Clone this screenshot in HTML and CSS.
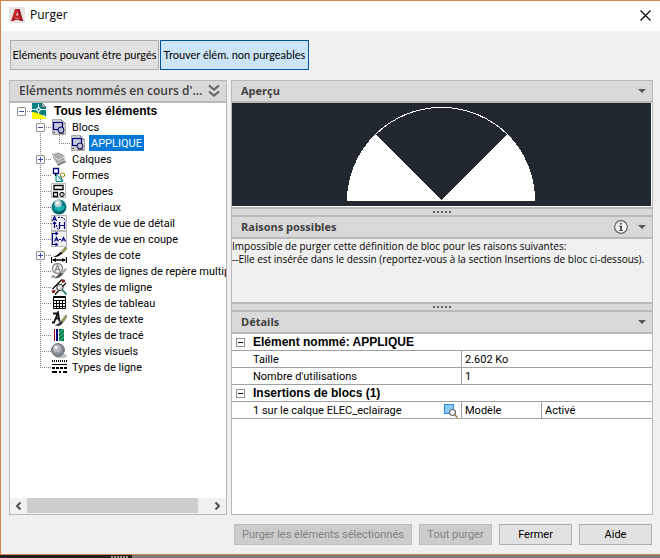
FILE: index.html
```html
<!DOCTYPE html>
<html lang="fr">
<head>
<meta charset="utf-8">
<title>Purger</title>
<link rel="stylesheet" href="styles.css">
</head>
<body>
<main class="dialog">
  <header class="titlebar">
    <svg class="logo" viewBox="0 0 16 16" aria-hidden="true">
      <rect width="16" height="16" fill="#e9e4e4"/>
      <path d="M2 14 6 2h4.500L14 14h-3.500l-.8-3H6.500l-1.300 3z" fill="#c4262e"/>
      <path d="M7.200 8.500 8.300 4.500 9.300 8.500z" fill="#eadada"/>
      <path d="M10.500 2 14 14h-2L8.500 2z" fill="#8f1a20"/>
      <path d="M2 14 4 11.500h8l1 1.500H5.500L4.800 14z" fill="#a51d25"/>
    </svg>
    <h1 class="title">Purger</h1>
    <button class="close" type="button" aria-label="Fermer la fenêtre">
      <svg viewBox="0 0 11 11" aria-hidden="true"><path d="M.5.500l10 10M10.500.500l-10 10" stroke="#000" stroke-width="1.200"/></svg>
    </button>
  </header>

  <nav class="modes">
    <button class="mode" type="button">Eléments pouvant être purgés</button>
    <button class="mode active" type="button">Trouver élém. non purgeables</button>
  </nav>

  <div class="panes">
    <section class="pane">
      <div class="head">
        <h2 class="head-title wide">Eléments nommés en cours d'...</h2>
        <svg class="chevrons" viewBox="0 0 12 14" aria-hidden="true"><path d="M1 1.500l5 4 5-4M1 7.500l5 4 5-4" fill="none" stroke="#666" stroke-width="2.200"/></svg>
      </div>
      <ul class="tree">
        <li class="row root">
          <span class="gutter stub"><button class="toggle" type="button" aria-label="Réduire"></button></span>
          <svg class="icon" viewBox="0 0 16 16" aria-hidden="true">
            <path d="M0 0h10l4 4v8H0z" fill="#008080"/><path d="M10 0v4h4z" fill="#ddd" stroke="#555" stroke-width=".7"/>
            <path d="M0 9c5 0 9 2 14 6v1H0z" fill="#ff0"/><path d="M7 10c3 0 5 2 7 4v-4z" fill="#008080"/>
            <path d="M0 6.500h5M8 6.500h6M6.500 1v4M6.500 8v3M5 5h3v3H5z" fill="none" stroke="#fff"/>
          </svg>
          <span class="label strong">Tous les éléments</span>
        </li>
        <li class="row">
          <span class="gutter"><button class="toggle" type="button" aria-label="Réduire"></button></span>
          <svg class="icon" viewBox="0 0 16 16" aria-hidden="true"><use href="#block"/></svg>
          <span class="label">Blocs</span>
        </li>
        <li class="row">
          <span class="guide"></span><span class="gutter last"></span>
          <svg class="icon" viewBox="0 0 16 16" aria-hidden="true">
            <g id="block"><path d="M1.500.500h9l4 4v11h-13z" fill="#d0d0d0" stroke="#aaa"/><path d="M10.500.500v4h4z" fill="#f4f4f4" stroke="#999"/>
            <rect x="2.500" y="3.500" width="9" height="7" fill="#c8c8dc" stroke="#000080" stroke-width="1.200"/>
            <circle cx="10" cy="11" r="3" fill="#bdbdd0" stroke="#000060"/><path d="M2 13.500h2M8 14.500h5" stroke="#555"/></g>
          </svg>
          <span class="label selected">APPLIQUE</span>
        </li>
        <li class="row">
          <span class="gutter"><button class="toggle plus" type="button" aria-label="Développer"></button></span>
          <svg class="icon" viewBox="0 0 16 16" aria-hidden="true">
            <g stroke="#fff" stroke-width=".7"><path d="M3 9l8-2 5 4-9 4.500z" fill="#858585"/><path d="M1 6l8-2 6 4-9 4.500z" fill="#999"/><path d="M0 3l8-2 7 4-8 4.500z" fill="#ababab"/></g>
          </svg>
          <span class="label">Calques</span>
        </li>
        <li class="row">
          <span class="gutter"></span>
          <svg class="icon" viewBox="0 0 16 16" aria-hidden="true">
            <path d="M2.500 1.500h5v5h-5z" fill="#fff" stroke="#000080" stroke-width="1.300"/><path d="M5 7v7.500h6.500z" fill="#dff" stroke="#008080"/><path d="M4.500 7v2" stroke="#000"/>
            <circle cx="11.500" cy="8" r="2.200" fill="#fff" stroke="#998a00"/><path d="M9 9l3 5" stroke="#008080"/>
          </svg>
          <span class="label">Formes</span>
        </li>
        <li class="row">
          <span class="gutter"></span>
          <svg class="icon" viewBox="0 0 16 16" aria-hidden="true">
            <rect x=".5" y=".5" width="14" height="14" fill="#fff" stroke="#777" stroke-dasharray="1 1"/>
            <path d="M3 2.500h9v4H3zM2.500 9.500h4v4h-4z" fill="#fff" stroke="#000" stroke-width="1.300"/><circle cx="11" cy="11.500" r="2.200" fill="#bbb" stroke="#000"/>
          </svg>
          <span class="label">Groupes</span>
        </li>
        <li class="row">
          <span class="gutter"></span>
          <svg class="icon" viewBox="0 0 16 16" aria-hidden="true">
            <circle cx="8" cy="8" r="7.500" fill="#007c80"/><path d="M2 12c4 3 9 2 12-3 0 5-8 8-12 3z" fill="#003c48"/><ellipse cx="8.500" cy="9" rx="5" ry="3" fill="#18b4b4"/><circle cx="7" cy="4.500" r="3.800" fill="#b9cfcf"/><circle cx="6.500" cy="4" r="1.600" fill="#fff"/>
          </svg>
          <span class="label">Matériaux</span>
        </li>
        <li class="row">
          <span class="gutter"></span>
          <svg class="icon" viewBox="0 0 16 16" aria-hidden="true">
            <rect x=".5" y=".5" width="15" height="15" fill="#f2f2f2" stroke="#bbb"/>
            <path d="M1.500 6l2-4.500 2 4.500M2.500 4.500h2M3.500 7v6M2 9l1.500-2L5 9M8.500 7v7M8.500 10.500h5M13.500 7v7" fill="none" stroke="#000080" stroke-width="1.200"/><path d="M7 2.500c4-1 7 1 7.500 4M5.500 10c0 2 1 4 2.500 5" fill="none" stroke="#000080" stroke-dasharray="2 1"/>
          </svg>
          <span class="label">Style de vue de détail</span>
        </li>
        <li class="row">
          <span class="gutter"></span>
          <svg class="icon" viewBox="0 0 16 16" aria-hidden="true">
            <rect x=".5" y=".5" width="15" height="15" fill="#f2f2f2" stroke="#bbb"/>
            <path d="M6 2.500H1.500v11H6M4.500 1l2 1.500-2 1.500M4.500 12l2 1.500-2 1.500M3.500 10.500l2-4 2 4M4.500 9h2M8 8.500h2M10.500 10.500l2-4 2 4M11.500 9h2" fill="none" stroke="#000080" stroke-width="1.100"/>
          </svg>
          <span class="label">Style de vue en coupe</span>
        </li>
        <li class="row">
          <span class="gutter"><button class="toggle plus" type="button" aria-label="Développer"></button></span>
          <svg class="icon" viewBox="0 0 16 16" aria-hidden="true">
            <path d="M9 6l5.500-6 1.500 1.500L11 7z" fill="#a8a042" stroke="#444" stroke-width=".6"/><path d="M2 9.500c3 1 6 0 9-3L9.500 5C7 7 6 9 2 9.500z" fill="#000"/>
            <path d="M.5 10v6M15.500 10v6M2 13h12" stroke="#000" stroke-width="1.300"/><path d="M1 13l4-2v4zM15 13l-4-2v4z"/>
          </svg>
          <span class="label">Styles de cote</span>
        </li>
        <li class="row">
          <span class="gutter"></span>
          <svg class="icon" viewBox="0 0 16 16" aria-hidden="true">
            <circle cx="6.500" cy="5.500" r="5" fill="#eee" stroke="#888" stroke-width="1.300"/><path d="M4 8.500L6.500 2 9 8.500M5 6.500h3" fill="none" stroke="#888" stroke-width="1.200"/>
            <path d="M2 11.500l-2 3h5" fill="#888"/><path d="M9 10l5.500-5 1.500 1.500L11 12z" fill="#aaa"/><path d="M3 15c3-1 4-4 7-5.500l2 1.500c-2 3-5 5-9 4z" fill="#555"/>
          </svg>
          <span class="label">Styles de lignes de repère multiples</span>
        </li>
        <li class="row">
          <span class="gutter"></span>
          <svg class="icon" viewBox="0 0 16 16" aria-hidden="true">
            <path d="M1.500 10L11 .500M4 15.500L15 4" stroke="#000" stroke-width="1.200"/><path d="M3 12.500l9.500-10" stroke="#555" stroke-dasharray="2 1"/>
            <circle cx="12.500" cy="2" r="1.700" fill="#922"/><circle cx="2.500" cy="12.500" r="1.700" fill="#922"/><circle cx="9" cy="8.500" r="3.200" fill="#eee" fill-opacity=".8" stroke="#333"/><path d="M11.500 11l4 4.500" stroke="#087878" stroke-width="1.700"/>
          </svg>
          <span class="label">Styles de mligne</span>
        </li>
        <li class="row">
          <span class="gutter"></span>
          <svg class="icon" viewBox="0 0 16 16" aria-hidden="true">
            <path d="M2.500 1.500h12v12h-12z" fill="#fff" stroke="#000"/><path d="M2 2.500h13M2 5.500h13M2 8.500h13M2 11.500h13M5.500 5v9M8.500 5v9M11.500 5v9" stroke="#000"/>
          </svg>
          <span class="label">Styles de tableau</span>
        </li>
        <li class="row">
          <span class="gutter"></span>
          <svg class="icon" viewBox="0 0 16 16" aria-hidden="true">
            <path d="M1 11.500h2L7 1.500l1.500 9M4 7.500h4M2 2.500h4" fill="none" stroke="#111" stroke-width="1.800"/><path d="M10 10l5-6 1 1.500-4 6z" fill="#a8a042" stroke="#555" stroke-width=".6"/><path d="M4 14c3 0 4-3 6-4l2 1.500C10 15 7 16 4 14z" fill="#333"/>
          </svg>
          <span class="label">Styles de texte</span>
        </li>
        <li class="row">
          <span class="gutter"></span>
          <svg class="icon" viewBox="0 0 16 16" aria-hidden="true">
            <path d="M3 2h1v12H3z" fill="#a00000"/><path d="M5 2h2v12H5z" fill="#000080"/><path d="M8 2h5v12H8z" fill="#007a50"/><path d="M8 6l5-4M8 10l5-4M8 14l5-4" stroke="#6fd08c"/>
          </svg>
          <span class="label">Styles de tracé</span>
        </li>
        <li class="row">
          <span class="gutter"></span>
          <svg class="icon" viewBox="0 0 16 16" aria-hidden="true">
            <ellipse cx="10" cy="13" rx="6" ry="2.500" fill="#c4c4c4"/><circle cx="7" cy="7" r="6.300" fill="#8a8f96" stroke="#4c5a68"/><circle cx="6" cy="5.500" r="4" fill="#b4b8bc"/><circle cx="5" cy="4.500" r="1.800" fill="#f4f4f4"/>
          </svg>
          <span class="label">Styles visuels</span>
        </li>
        <li class="row">
          <span class="gutter last"></span>
          <svg class="icon" viewBox="0 0 16 16" aria-hidden="true">
            <path d="M1 2h15" stroke="#000" stroke-width="2" stroke-dasharray="1 1"/><path d="M1 5.500h15" stroke="#000"/><path d="M1 9h15" stroke="#000" stroke-width="2" stroke-dasharray="3 1"/><path d="M1 13h15" stroke="#000" stroke-width="2" stroke-dasharray="5 2 2 2"/>
          </svg>
          <span class="label">Types de ligne</span>
        </li>
      </ul>
      <div class="scrollbar">
        <button class="arrow" type="button" aria-label="Défiler à gauche"><svg viewBox="0 0 7 8" aria-hidden="true"><path d="M5.500.500L2 4l3.500 3.500" fill="none" stroke="#505050" stroke-width="2"/></svg></button>
        <div class="track"><div class="thumb"></div></div>
        <button class="arrow" type="button" aria-label="Défiler à droite"><svg viewBox="0 0 7 8" aria-hidden="true"><path d="M1.500.500L5 4 1.500 7.500" fill="none" stroke="#505050" stroke-width="2"/></svg></button>
      </div>
    </section>

    <section class="pane">
      <div class="head">
        <h2 class="head-title">Aperçu</h2>
        <span class="caret"></span>
      </div>
      <div class="preview">
        <svg class="drawing" viewBox="0 0 419 103" preserveAspectRatio="xMidYMid slice" role="img" aria-label="Aperçu du bloc APPLIQUE">
          <path d="M209.500 97L143.500 31A94 94 0 0 0 115 98H303A94 94 0 0 0 275.500 31z" fill="#fff" shape-rendering="crispEdges"/>
          <path d="M143.500 31.500A94 94 0 0 1 275.500 31.500" fill="none" stroke="#fff" shape-rendering="crispEdges"/>
        </svg>
      </div>
      <div class="splitter"><span class="grip"></span></div>
      <div class="head">
        <h2 class="head-title">Raisons possibles</h2>
        <svg class="info" viewBox="0 0 14 14" aria-hidden="true"><circle cx="7" cy="7" r="6.300" fill="#f4f4f4" stroke="#666" stroke-width="1.200"/><path d="M6 3h2v1.600H6zM5 5.800h3V10h1v1H5v-1h1V6.800H5z" fill="#555"/></svg>
        <span class="caret"></span>
      </div>
      <div class="reasons">
        <p>Impossible de purger cette définition de bloc pour les raisons suivantes:</p>
        <p>--Elle est insérée dans le dessin (reportez-vous à la section Insertions de bloc ci-dessous).</p>
      </div>
      <div class="splitter"><span class="grip"></span></div>
      <div class="head">
        <h2 class="head-title">Détails</h2>
        <span class="caret"></span>
      </div>
      <div class="details">
        <table class="grid">
          <colgroup><col class="col-name"><col class="col-space"><col></colgroup>
          <tr><th colspan="3"><button class="toggle plain" type="button" aria-label="Réduire"></button>Elément nommé: APPLIQUE</th></tr>
          <tr><td class="name">Taille</td><td colspan="2">2.602 Ko</td></tr>
          <tr><td class="name">Nombre d'utilisations</td><td colspan="2">1</td></tr>
          <tr><th colspan="3"><button class="toggle plain" type="button" aria-label="Réduire"></button>Insertions de blocs (1)</th></tr>
          <tr>
            <td class="name"><div class="with-action">1 sur le calque ELEC_eclairage
              <button class="zoom" type="button" aria-label="Zoom sur l'insertion"><svg viewBox="0 0 15 14" aria-hidden="true"><rect x="1.500" y=".5" width="9" height="9" fill="#8cc8f8" stroke="#2a8ad8"/><circle cx="9.500" cy="8.500" r="3" fill="#fff" stroke="#666" stroke-width="1.200"/><path d="M11.500 10.500l3 3" stroke="#a07840" stroke-width="1.500"/></svg></button></div></td>
            <td>Modèle</td><td>Activé</td>
          </tr>
        </table>
      </div>
    </section>
  </div>

  <footer class="actions">
    <button class="btn broad" type="button" disabled>Purger les éléments sélectionnés</button>
    <button class="btn" type="button" disabled>Tout purger</button>
    <button class="btn" type="button">Fermer</button>
    <button class="btn" type="button">Aide</button>
  </footer>
</main>
<div class="backdrop"><div class="dock"></div></div>
</body>
</html>
```

FILE: styles.css
```css
* { box-sizing: border-box; }

body {
  margin: 0;
  height: 100vh;
  display: flex;
  flex-direction: column;
  overflow: hidden;
  background: #7a7a7a;
  color: #000;
  font: 11px/16px Roboto, "Liberation Sans", sans-serif;
}

h1, h2, p, ul { margin: 0; padding: 0; }
button { margin: 0; padding: 0; font: inherit; color: inherit; white-space: nowrap; }
svg { display: block; flex: none; }

.dialog {
  flex: 1;
  min-height: 0;
  display: flex;
  flex-direction: column;
  background: #f0f0f0;
  border: 1px solid #d8834c;
  border-right: 0;
}

.titlebar {
  height: 30px;
  display: flex;
  align-items: center;
  padding: 0 9px 2px 8px;
  background: #fff;
}
.logo { width: 16px; height: 16px; }
.title { margin-left: 5px; font: 12px/16px "Open Sans", sans-serif; }
.close { width: 11px; height: 11px; margin-left: auto; border: 0; background: none; }

.modes { display: flex; gap: 1px; padding: 9px 9px 10px; }
.mode { width: 149px; height: 30px; border: 1px solid #adadad; background: #e1e1e1; font-family: Lato, sans-serif; }
.mode.active { border-color: #005499; background: #cce4f7; }

.panes {
  flex: 1;
  min-height: 0;
  display: grid;
  grid-template-columns: 218px minmax(0, 1fr);
  gap: 4px;
  padding: 0 7px 0 8px;
}
.pane {
  min-height: 0;
  display: flex;
  flex-direction: column;
  border: 1px solid #b9b9b9;
  background: #fff;
}

.head {
  flex: none;
  height: 22px;
  display: flex;
  align-items: center;
  padding: 0 6px 0 9px;
  border-bottom: 2px solid #b9b9b9;
  background: #d9d9d9;
  color: #404040;
}
.head-title { flex: 1; font: bold 11px/16px "Open Sans", sans-serif; white-space: nowrap; }
.head-title.wide { font-size: 12px; font-weight: 600; }
.chevrons { width: 12px; height: 14px; }
.caret {
  width: 8px;
  height: 4px;
  background: #5a5a5a;
  clip-path: polygon(0 0, 100% 0, 50% 100%);
}
.info { width: 14px; height: 14px; margin-right: 10px; }

.tree { flex: 1; min-height: 0; overflow: hidden; list-style: none; }
.row { display: flex; height: 16px; padding-left: 26px; white-space: nowrap; }
.row.root { padding-left: 7px; }
.gutter, .guide { flex: none; width: 15px; height: 16px; background-repeat: no-repeat; }
.gutter {
  padding-top: 4px;
  background-image:
    repeating-linear-gradient(#808080 0 1px, transparent 1px 2px),
    repeating-linear-gradient(90deg, #808080 0 1px, transparent 1px 2px);
  background-position: 4px 0, 4px 8px;
  background-size: 1px 16px, 11px 1px;
}
.gutter.last { background-size: 1px 8px, 11px 1px; }
.gutter.stub { background-size: 0 0, 11px 1px; }
.guide {
  width: 19px;
  background-image: repeating-linear-gradient(#808080 0 1px, transparent 1px 2px);
  background-position: 4px 0;
  background-size: 1px 16px;
}
.icon { width: 16px; height: 16px; }
.label { height: 16px; margin-left: 3px; padding: 0 2px; line-height: 18px; }
.label.strong { font: bold 12px/16px "Liberation Sans", sans-serif; margin-left: 4px; }
.label.selected { background: #0078d7; color: #fff; }

.toggle {
  display: block;
  width: 9px;
  height: 9px;
  border: 1px solid #919191;
  border-radius: 1px;
  background: linear-gradient(#3c50a0, #3c50a0) center / 5px 1px no-repeat #fff;
}
.toggle.plus {
  background:
    linear-gradient(#3c50a0, #3c50a0) center / 5px 1px no-repeat,
    linear-gradient(#3c50a0, #3c50a0) center / 1px 5px no-repeat #fff;
}
.toggle.plain {
  display: inline-block;
  margin: 0 8px 0 4px;
  border-radius: 0;
  background: linear-gradient(#000, #000) center / 5px 1px no-repeat #fff;
}

.scrollbar { flex: none; height: 16px; display: flex; background: #f0f0f0; }
.arrow { width: 17px; border: 0; background: none; display: grid; place-items: center; }
.arrow svg { width: 7px; height: 8px; }
.track { flex: 1; }
.thumb { width: 94%; height: 15px; background: #cdcdcd; }

.preview { flex: none; height: 104px; padding: 0 1px 1px 0; }
.drawing { width: 100%; height: 103px; background: #212830; }

.splitter {
  flex: none;
  height: 10px;
  display: grid;
  place-items: center;
  border: solid #b9b9b9;
  border-width: 2px 0;
  background: #d9d9d9;
}
.grip { width: 18px; height: 2px; background: repeating-linear-gradient(90deg, #606060 0 2px, transparent 2px 4px); }

.reasons {
  flex: none;
  height: 63px;
  padding-top: 1px;
  overflow: hidden;
  background: #f0f0f0;
  font-family: "Open Sans", sans-serif;
  font-size: 10px;
  line-height: 13px;
  white-space: nowrap;
}

.details { flex: 1; min-height: 0; overflow: hidden; }
.grid { width: 100%; border-collapse: separate; border-spacing: 0; table-layout: fixed; }
.col-name { width: 229px; }
.col-space { width: 80px; }
.grid th, .grid td { height: 17px; padding: 0 3px; border-bottom: 1px solid #a0a0a0; text-align: left; font-weight: normal; white-space: nowrap; }
.grid td { padding-top: 1px; line-height: 15px; }
.grid th { padding: 0; font: bold 12px/16px "Liberation Sans", sans-serif; }
.grid td + td { border-left: 1px solid #a0a0a0; }
.grid td.name { padding-left: 21px; }
.with-action { display: flex; justify-content: space-between; align-items: center; }
.zoom { border: 0; background: none; }
.zoom svg { width: 15px; height: 14px; }

.actions { flex: none; display: flex; justify-content: flex-end; gap: 7px; padding: 9px 8px; }
.btn { width: 73px; height: 21px; border: 1px solid #adadad; background: #e1e1e1; }
.btn:disabled { border-color: #bfbfbf; background: #ccc; color: #838383; }
.btn.broad { width: 178px; }

.backdrop { flex: none; height: 3px; background: #7a7a7a; }
.dock {
  width: 20%;
  height: 3px;
  background: repeating-linear-gradient(90deg, #999 0 2px, transparent 2px 3px) right 3px bottom / 18px 2px no-repeat #1d2127;
}
```
